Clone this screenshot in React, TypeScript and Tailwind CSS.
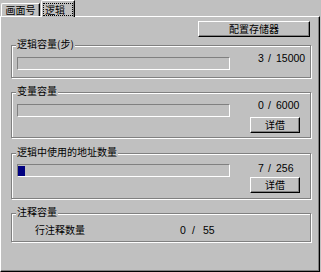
import React from "react";

const cjk = "font-['Noto_Sans_CJK_SC',sans-serif] text-[10px] leading-[12px] text-black";
const num = "font-['Liberation_Sans',sans-serif] text-[10.5px] leading-[12px] text-black";

const Btn: React.FC<{ label: string; className?: string }> = ({ label, className = "" }) => (
  <div
    className={`flex items-center justify-center bg-[#c0c0c0] border border-white border-r-black border-b-black shadow-[inset_-1px_-1px_0_#808080] ${cjk} ${className}`}
  >
    {label}
  </div>
);

const Bar: React.FC<{ fill?: boolean }> = ({ fill }) => (
  <div className="w-[213px] h-[13px] border border-[#808080] border-r-white border-b-white pt-[1px]">
    {fill && <div className="w-[7px] h-[10px] bg-[#000080]" />}
  </div>
);

const Count: React.FC<{ used: string; total: string; className?: string }> = ({ used, total, className = "" }) => (
  <div className={`flex whitespace-pre ${num} ${className}`}>
    <span className="w-[10px]">{used}</span>
    <span className="w-[8px]">/</span>
    <span>{total}</span>
  </div>
);

const Group: React.FC<{ title: string; className?: string; children?: React.ReactNode }> = ({
  title,
  className = "",
  children,
}) => (
  <div
    className={`relative ml-[10px] w-[300px] border border-[#808080] shadow-[inset_1px_1px_0_#fff,1px_1px_0_#fff] ${className}`}
  >
    <span className={`absolute -top-[8px] left-[4px] bg-[#c0c0c0] px-[1px] ${cjk}`}>{title}</span>
    {children}
  </div>
);

export default function App() {
  return (
    <div className="w-[321px] h-[272px] bg-[#c0c0c0] overflow-hidden">
      {/* tabs */}
      <div className="flex items-end h-[16px]">
        <div
          className={`ml-[1px] h-[13px] w-[39px] flex items-center justify-center border-t border-l border-r border-white border-r-black shadow-[inset_-1px_0_0_#808080] rounded-tl-[2px] ${cjk}`}
        >
          画面号
        </div>
        <div className="relative z-10 -mb-[1px] ml-[1px] h-[17px] w-[34px] flex items-start pt-[2px] pl-[1px] bg-[#c0c0c0] border-t border-l border-r border-white border-r-black shadow-[inset_-1px_0_0_#808080] rounded-tl-[2px]">
          <span className={`w-[30px] h-[13px] border border-dotted border-black pl-[1px] ${cjk}`}>逻辑</span>
        </div>
      </div>

      {/* panel */}
      <div className="w-[320px] h-[256px] border border-white border-r-black border-b-black shadow-[inset_-1px_-1px_0_#808080]">
        <div className="flex justify-end mt-[4px] pr-[9px]">
          <Btn label="配置存储器" className="w-[112px] h-[16px]" />
        </div>

        <Group title="逻辑容量(步)" className="mt-[8px] h-[33px] pt-[11px] pl-[5px]">
          <div className="flex items-start">
            <Bar />
            <Count used="3" total="15000" className="ml-[28px] -mt-[5px]" />
          </div>
        </Group>

        <Group title="变量容量" className="mt-[14px] h-[46px] pt-[11px] pl-[5px]">
          <div className="flex items-start">
            <Bar />
            <Count used="0" total="6000" className="ml-[28px] -mt-[5px]" />
          </div>
          <div className="flex justify-end pr-[10px]">
            <Btn label="详借" className="w-[50px] h-[16px]" />
          </div>
        </Group>

        <Group title="逻辑中使用的地址数量" className="mt-[15px] h-[46px] pt-[10px] pl-[5px]">
          <div className="flex items-start">
            <Bar fill />
            <Count used="7" total="256" className="ml-[28px] -mt-[2px]" />
          </div>
          <div className="flex justify-end pr-[10px]">
            <Btn label="详借" className="w-[50px] h-[16px]" />
          </div>
        </Group>

        <Group title="注释容量" className="mt-[14px] h-[29px] pt-[10px] pl-[23px]">
          <div className="flex items-center">
            <span className={cjk}>行注释数量</span>
            <Count used="0" total="55" className="ml-[95px] [&>span:first-child]:w-[12px] [&>span:nth-child(2)]:w-[11px]" />
          </div>
        </Group>
      </div>
    </div>
  );
}
